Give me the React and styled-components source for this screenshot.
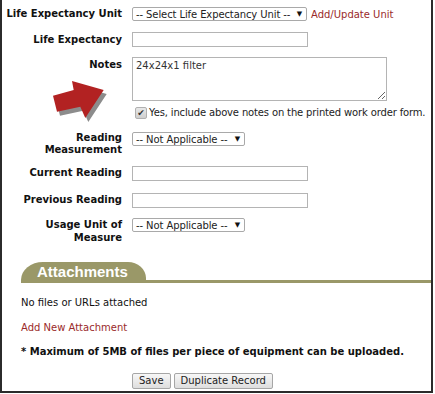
import React from 'react';
import styled, { createGlobalStyle } from 'styled-components';

const GlobalStyle = createGlobalStyle`
    body {
        margin: 0;
        background: #fff;
        font-family: "DejaVu Sans", Verdana, sans-serif;
        color: #111;
    }
`;

const Page = styled.div`
    position: relative;
    box-sizing: border-box;
    width: 433px;
    height: 393px;
    overflow: hidden;
    background: #fff;
    border: 2px solid #2b2b2b;
    border-top: none;
    font-size: 10px;
`;

const Form = styled.div`
    padding-top: 7px;
`;

const FieldRow = styled.div`
    display: grid;
    grid-template-columns: 120px 1fr;
    column-gap: 10px;
    align-items: start;
    height: ${p => p.$h}px;
`;

const Label = styled.div`
    text-align: right;
    font-weight: bold;
    font-size: 10px;
    line-height: ${p => p.$lh || 13}px;
    white-space: nowrap;
    padding-top: ${p => p.$top || 0}px;
`;

const Controls = styled.div`
    display: flex;
    align-items: center;
    gap: 4px;
`;

const FakeSelect = styled.div`
    box-sizing: border-box;
    display: flex;
    align-items: center;
    justify-content: space-between;
    width: ${p => p.$width}px;
    height: 14px;
    padding: 0 4px 0 3px;
    border: 1px solid #a9a9a9;
    border-radius: 2px;
    background: #fff;
    font-size: 10px;
    letter-spacing: -0.1px;
    color: #222;
    white-space: nowrap;

    span.caret {
        font-size: 7px;
        color: #111;
    }
`;

const TextInput = styled.input`
    box-sizing: border-box;
    width: 176px;
    height: 15px;
    margin: 0;
    border: 1px solid #b4b4b4;
    font: inherit;
`;

const Notes = styled.textarea`
    box-sizing: border-box;
    width: 255px;
    height: 44px;
    margin: 0;
    padding: 2px 3px;
    border: 1px solid #b4b4b4;
    font-family: "DejaVu Sans", Verdana, sans-serif;
    font-size: 10px;
    color: #333;
    resize: vertical;
`;

const Link = styled.a`
    color: #9a2a2a;
    text-decoration: none;
    font-size: 10px;
`;

const CheckLine = styled.label`
    display: flex;
    align-items: center;
    gap: 2px;
    padding-left: 3px;
    font-size: 10px;
    line-height: 12px;
    letter-spacing: -0.15px;
    color: #222;
    white-space: nowrap;
`;

const CheckBox = styled.span`
    box-sizing: border-box;
    display: inline-flex;
    align-items: center;
    justify-content: center;
    width: 12px;
    height: 12px;
    border: 1px solid #b0b0b0;
    border-radius: 2px;
    background: linear-gradient(#e8e8e8, #cfcfcf);
    font-size: 9px;
    letter-spacing: 0;
    color: #333;
`;

const Attachments = styled.section`
    margin-left: 19px;
`;

const TabBar = styled.div`
    border-bottom: 3px solid #9a9868;
`;

const Tab = styled.div`
    display: inline-block;
    box-sizing: border-box;
    height: 18px;
    padding: 0 18px 0 16px;
    background: #9a9868;
    border-radius: 22px 18px 0 0 / 18px 16px 0 0;
    color: #fff;
    font-family: "Liberation Sans", Arial, sans-serif;
    font-weight: bold;
    font-size: 15px;
    line-height: 19px;
`;

const Line = styled.p`
    margin: ${p => p.$top}px 0 0;
    font-size: 10px;
    line-height: 13px;
    font-weight: ${p => (p.$bold ? 'bold' : 'normal')};
    color: #111;
`;

const Buttons = styled.div`
    display: flex;
    gap: 3px;
    margin: 15px 0 0 130px;
`;

const Button = styled.button`
    box-sizing: border-box;
    height: 16px;
    padding: 0 6px;
    border: 1px solid #a6a6a6;
    border-radius: 2px;
    background: linear-gradient(#f7f7f7, #dedede);
    font-family: "DejaVu Sans", Verdana, sans-serif;
    font-size: 10px;
    line-height: 12px;
    color: #222;
`;

const Arrow = styled.svg`
    position: absolute;
    left: 45px;
    top: 75px;
`;

const arrowPoints = '6,20.7 26.7,15 25,6 56.7,15 38.3,43 33.3,31.7 10,36.7';

const Select = ({ width, children }) => (
    <FakeSelect $width={width}>
        <span>{children}</span>
        <span className="caret">▼</span>
    </FakeSelect>
);

export default function App() {
    return (
        <Page>
            <GlobalStyle />
            <Form>
                <FieldRow $h={25}>
                    <Label>Life Expectancy Unit</Label>
                    <Controls>
                        <Select width={175}>-- Select Life Expectancy Unit --</Select>
                        <Link href="#">Add/Update Unit</Link>
                    </Controls>
                </FieldRow>
                <FieldRow $h={25}>
                    <Label $top={1}>Life Expectancy</Label>
                    <TextInput type="text" />
                </FieldRow>
                <FieldRow $h={50}>
                    <Label $top={1}>Notes</Label>
                    <Notes defaultValue="24x24x1 filter" />
                </FieldRow>
                <FieldRow $h={25}>
                    <span />
                    <CheckLine>
                        <CheckBox>✔</CheckBox>
                        Yes, include above notes on the printed work order form.
                    </CheckLine>
                </FieldRow>
                <FieldRow $h={34}>
                    <Label $lh={12}>Reading<br />Measurement</Label>
                    <Select width={113}>-- Not Applicable --</Select>
                </FieldRow>
                <FieldRow $h={27}>
                    <Label>Current Reading</Label>
                    <TextInput type="text" />
                </FieldRow>
                <FieldRow $h={25}>
                    <Label>Previous Reading</Label>
                    <TextInput type="text" />
                </FieldRow>
                <FieldRow $h={44}>
                    <Label>Usage Unit of<br />Measure</Label>
                    <Select width={113}>-- Not Applicable --</Select>
                </FieldRow>
            </Form>

            <Attachments>
                <TabBar>
                    <Tab>Attachments</Tab>
                </TabBar>
                <Line $top={13}>No files or URLs attached</Line>
                <Line $top={12}><Link href="#">Add New Attachment</Link></Line>
                <Line $top={11} $bold>* Maximum of 5MB of files per piece of equipment can be uploaded.</Line>
            </Attachments>

            <Buttons>
                <Button>Save</Button>
                <Button>Duplicate Record</Button>
            </Buttons>

            <Arrow width="65" height="50" viewBox="0 0 65 50">
                <polygon points={arrowPoints} fill="#8c8c8c" transform="translate(3,4)" />
                <polygon points={arrowPoints} fill="#b22222" />
            </Arrow>
        </Page>
    );
}
